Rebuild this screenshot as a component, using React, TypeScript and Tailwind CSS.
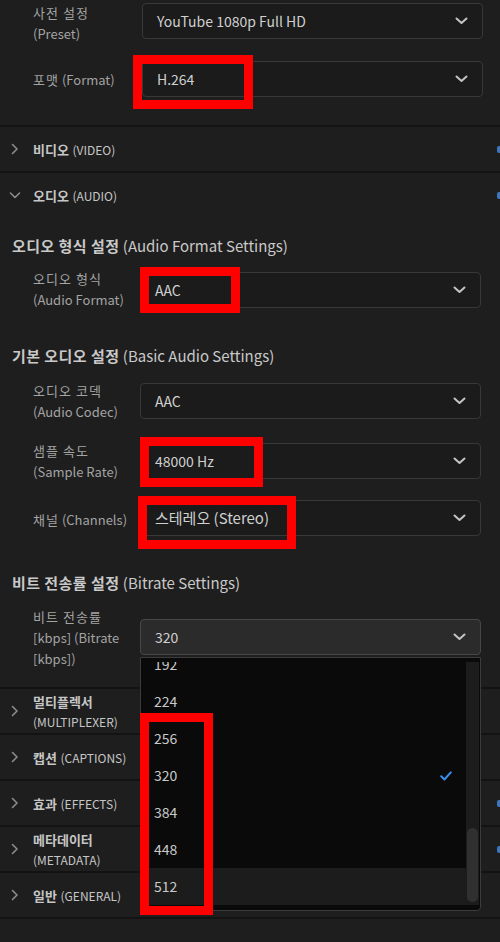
import React from "react";

const FONT = "font-['Noto_Sans_CJK_KR','Noto_Sans',sans-serif]";

function Chevron() {
  return (
    <svg width="13" height="8" viewBox="0 0 13 8" fill="none" className="shrink-0">
      <path d="M1.5 1.5l5 4.5 5-4.5" stroke="#c4c4c4" strokeWidth="2" strokeLinecap="round" strokeLinejoin="round" />
    </svg>
  );
}

function Caret({ open }: { open?: boolean }) {
  return (
    <svg width="12" height="12" viewBox="0 0 12 12" fill="none" className="shrink-0">
      {open ? (
        <path d="M1.5 4l4.5 4.5L10.5 4" stroke="#8c8c8c" strokeWidth="1.6" strokeLinecap="round" strokeLinejoin="round" />
      ) : (
        <path d="M3.5 1.5L8 6l-4.5 4.5" stroke="#8c8c8c" strokeWidth="1.6" strokeLinecap="round" strokeLinejoin="round" />
      )}
    </svg>
  );
}

function Select({ value, big, active }: { value: string; big?: boolean; active?: boolean }) {
  return (
    <div
      className={`flex h-[36px] items-center justify-between rounded-[4px] border pl-[14px] pr-[14px] ${
        active ? "border-[#474747] bg-[#2b2b2b]" : "border-[#383838] bg-[#1b1b1b]"
      }`}
    >
      <span className={`${big ? "text-[15px]" : "text-[14px]"} text-[#d0d0d0]`}>{value}</span>
      <Chevron />
    </div>
  );
}

function Label({ ko, en, extra }: { ko: string; en?: string; extra?: string }) {
  return (
    <div className="text-[#a3a3a3] leading-[21px]">
      <div className="text-[13px] tracking-[0.08em]">{ko}</div>
      {en && <div className="text-[13px]">{en}</div>}
      {extra && <div className="text-[13px]">{extra}</div>}
    </div>
  );
}

function Heading({ ko, en }: { ko: string; en: string }) {
  return (
    <div className="pl-[12px] text-[15px] leading-[22px] text-[#c9c9c9]">
      <span className="font-bold tracking-[0.03em]">{ko}</span> <span>{en}</span>
    </div>
  );
}

function Section({
  ko,
  en,
  open,
  mark,
  wrap,
}: {
  ko: string;
  en: string;
  open?: boolean;
  mark?: boolean;
  wrap?: boolean;
}) {
  return (
    <div className="flex h-[44px] items-center">
      <div className="flex w-[33px] justify-center pr-[3px]">
        <Caret open={open} />
      </div>
      <div className="text-[#c6c6c6] leading-[18px]">
        <span className="text-[13px] font-semibold">{ko}</span>
        {wrap ? <br /> : " "}
        <span className="text-[12px]">{en}</span>
      </div>
      <div className="flex-1" />
      {mark && <div className="h-[7px] w-[3px] rounded-l-[2px] bg-[#3d76bd]" />}
    </div>
  );
}

const RATES = ["192", "224", "256", "320", "384", "448", "512"];

function RateList() {
  return (
    <div className="absolute left-0 top-[38px] z-10 flex h-[254px] w-full flex-col rounded-b-[4px] border border-[#3c3c3c] bg-[#0a0a0a] pt-[4px] pb-[5px]">
      <div className="flex h-[243px]">
        <div className="flex-1 overflow-hidden">
          <div className="-mt-[16px]">
            {RATES.map((r) => (
              <div
                key={r}
                className={`flex h-[37px] items-center justify-between pl-[13px] pr-[14px] text-[14px] text-[#c9c9c9] ${
                  r === "512" ? "bg-[#1c1c1c]" : ""
                }`}
              >
                <span>{r}</span>
                {r === "320" && (
                  <svg width="12" height="10" viewBox="0 0 12 10" fill="none">
                    <path d="M1.2 5.2l3.2 3.3L10.8 1.4" stroke="#3a8ef0" strokeWidth="2" strokeLinecap="round" strokeLinejoin="round" />
                  </svg>
                )}
              </div>
            ))}
          </div>
        </div>
        <div className="mr-[1px] flex w-[13px] flex-col bg-[#1c1c1c] pt-[166px]">
          <div className="mx-[1px] h-[74px] rounded-full bg-[#303030]" />
        </div>
      </div>
    </div>
  );
}

function Mark({ x, y, w, h }: { x: number; y: number; w: number; h: number }) {
  return (
    <div
      className="pointer-events-none absolute z-20 border-[9px] border-[#ff0000]"
      style={{ left: x, top: y, width: w, height: h }}
    />
  );
}

export default function App() {
  return (
    <div className={`relative h-[942px] w-[500px] overflow-hidden bg-[#1e1e1e] ${FONT}`}>
      {/* export preset + format */}
      <div className="h-[125px] pt-[3px]">
        <div className="grid grid-cols-[109px_341px] items-start pl-[33px]">
          <div className="-mt-[1px]">
            <Label ko="사전 설정" en="(Preset)" />
          </div>
          <Select value="YouTube 1080p Full HD" />
        </div>
        <div className="mt-[17px] grid grid-cols-[109px_341px] items-center pl-[33px]">
          <div className="pt-[2px] text-[13px] text-[#a3a3a3]">
            <span className="tracking-[0.08em]">포맷</span> (Format)
          </div>
          <Select value="H.264" />
        </div>
      </div>

      <div className="border-y-2 border-[#131313]">
        <Section ko="비디오" en="(VIDEO)" mark />
      </div>
      <Section ko="오디오" en="(AUDIO)" open mark />

      {/* audio settings */}
      <div className="pb-[18px]">
        <div className="mt-[18px]">
          <Heading ko="오디오 형식 설정" en="(Audio Format Settings)" />
        </div>
        <div className="mt-[11px] grid grid-cols-[107px_341px] items-start pl-[33px]">
          <Label ko="오디오 형식" en="(Audio Format)" />
          <div className="mt-[4px]">
            <Select value="AAC" />
          </div>
        </div>

        <div className="mt-[35px]">
          <Heading ko="기본 오디오 설정" en="(Basic Audio Settings)" />
        </div>
        <div className="mt-[13px] grid grid-cols-[107px_341px] items-start pl-[33px]">
          <Label ko="오디오 코덱" en="(Audio Codec)" />
          <div className="mt-[3px]">
            <Select value="AAC" />
          </div>
        </div>
        <div className="mt-[18px] grid grid-cols-[107px_341px] items-start pl-[33px]">
          <Label ko="샘플 속도" en="(Sample Rate)" />
          <div className="mt-[3px]">
            <Select value="48000 Hz" />
          </div>
        </div>
        <div className="mt-[18px] grid grid-cols-[107px_341px] items-center pl-[33px]">
          <div className="pt-[4px] text-[13px] text-[#a3a3a3]">
            <span className="tracking-[0.08em]">채널</span> (Channels)
          </div>
          <Select value="스테레오 (Stereo)" big />
        </div>

        <div className="mt-[36px]">
          <Heading ko="비트 전송률 설정" en="(Bitrate Settings)" />
        </div>
        <div className="mt-[12px] grid grid-cols-[107px_341px] items-start pl-[33px]">
          <Label ko="비트 전송률" en="[kbps] (Bitrate" extra="[kbps])" />
          <div className="relative mt-[13px]">
            <Select value="320" active />
            <RateList />
          </div>
        </div>
      </div>

      <div className="border-t-2 border-[#131313]">
        <div className="border-b-2 border-[#131313]">
          <Section ko="멀티플렉서" en="(MULTIPLEXER)" wrap />
        </div>
        <div className="border-b-2 border-[#131313]">
          <Section ko="캡션" en="(CAPTIONS)" />
        </div>
        <div className="border-b-2 border-[#131313]">
          <Section ko="효과" en="(EFFECTS)" mark />
        </div>
        <div className="border-b-2 border-[#131313]">
          <Section ko="메타데이터" en="(METADATA)" wrap mark />
        </div>
        <div className="border-b-2 border-[#131313]">
          <Section ko="일반" en="(GENERAL)" />
        </div>
      </div>

      <Mark x={133} y={55} w={120} h={54} />
      <Mark x={140} y={267} w={100} h={46} />
      <Mark x={140} y={437} w={123} h={50} />
      <Mark x={138} y={496} w={158} h={53} />
      <Mark x={140} y={713} w={73} h={202} />
    </div>
  );
}
